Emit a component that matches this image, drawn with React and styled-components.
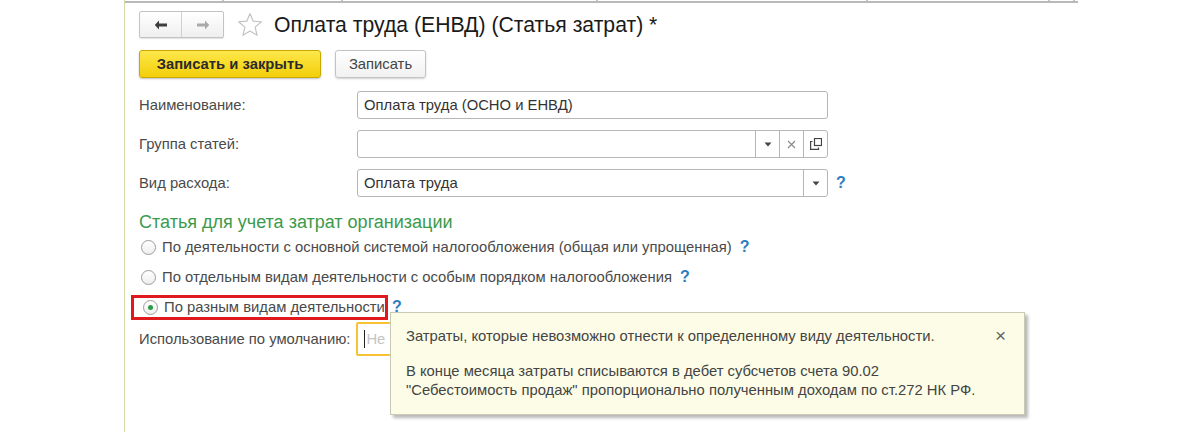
import React from "react";
import styled, { createGlobalStyle } from "styled-components";

const Global = createGlobalStyle`
  html, body { margin: 0; padding: 0; background: #ffffff; }
  body { font-family: "Liberation Sans", Arial, sans-serif; color: #444; }
  * { box-sizing: border-box; }
`;

const FS = "14.8px";

const Page = styled.div`
  width: 1200px;
  height: 432px;
  overflow: hidden;
  padding-left: 124px;
`;

const Window = styled.div`
  position: relative;
  width: 954px;
  height: 432px;
  border-left: 1px solid #d3dba6;
`;

const TabStrip = styled.div`
  display: flex;
  height: 3px;
  border-bottom: 2px solid #b9b9b9;
`;

const TabEdge = styled.div`
  width: ${(p) => p.$w}px;
  border-right: 2px solid #c4c4c4;
`;

const Content = styled.div`
  padding: 8px 0 0 14px;
`;

const HeaderRow = styled.div`
  display: flex;
  align-items: center;
  height: 27px;
`;

const NavGroup = styled.div`
  display: flex;
  width: 85px;
  height: 27px;
  border: 1px solid #c3c3c3;
  border-radius: 2px;
  background: linear-gradient(#ffffff, #efefef);
  box-shadow: 0 1px 1px rgba(0, 0, 0, 0.12);
`;

const NavBtn = styled.div`
  flex: 1;
  display: flex;
  align-items: center;
  justify-content: center;
  & + & { border-left: 1px solid #d0d0d0; }
`;

const StarWrap = styled.div`
  margin-left: 12px;
  width: 28px;
  height: 27px;
  display: flex;
  align-items: center;
  justify-content: center;
`;

const Title = styled.div`
  margin-left: 10px;
  font-size: 21.2px;
  color: #1a1a1a;
  white-space: nowrap;
`;

const ButtonRow = styled.div`
  display: flex;
  gap: 14px;
  margin-top: 12px;
`;

const Button = styled.div`
  width: ${(p) => p.$w}px;
  height: 28px;
  display: flex;
  align-items: center;
  justify-content: center;
  font-size: ${FS};
  border-radius: 3px;
  white-space: nowrap;
  ${(p) =>
    p.$primary
      ? `
    background: linear-gradient(#fde74a, #f3cf0a);
    border: 1px solid #c9a800;
    color: #2b2b2b;
    font-weight: bold;
    box-shadow: 0 1px 2px rgba(0,0,0,0.25);
  `
      : `
    background: linear-gradient(#ffffff, #f1f1f1);
    border: 1px solid #c3c3c3;
    color: #444;
    box-shadow: 0 1px 2px rgba(0,0,0,0.18);
  `}
`;

const Fields = styled.div`
  display: grid;
  grid-template-columns: 218px auto;
  row-gap: 11px;
  margin-top: 13px;
  align-items: center;
`;

const Label = styled.div`
  font-size: ${FS};
  color: #4a4a4a;
  white-space: nowrap;
`;

const FieldLine = styled.div`
  display: flex;
  align-items: center;
`;

const Input = styled.div`
  width: ${(p) => p.$w}px;
  height: 28px;
  display: flex;
  align-items: stretch;
  border: 1px solid #b6b6b6;
  border-radius: 3px;
  background: #fff;
  overflow: hidden;
`;

const InputText = styled.div`
  flex: 1;
  display: flex;
  align-items: center;
  padding-left: 6px;
  font-size: ${FS};
  color: #333;
  white-space: nowrap;
`;

const InputBtn = styled.div`
  width: 24px;
  display: flex;
  align-items: center;
  justify-content: center;
  border-left: 1px solid #b6b6b6;
  color: #555;
`;

const Help = styled.span`
  margin-left: ${(p) => p.$ml ?? 8}px;
  color: #2e7dbf;
  font-size: 16px;
  font-weight: bold;
`;

const SectionTitle = styled.div`
  margin-top: 14px;
  font-size: 18px;
  color: #3c9a4c;
  line-height: 22px;
`;

const Radios = styled.div`
  display: flex;
  flex-direction: column;
  gap: 8px;
  margin-top: 3px;
`;

const RadioRow = styled.div`
  display: flex;
  align-items: center;
  height: 22px;
`;

const RadioFrame = styled.div`
  display: flex;
  align-items: center;
  height: 25px;
  margin-left: -8px;
  padding: 0 0 0 7px;
  width: 257px;
  border: 3px solid #e0191f;
  white-space: nowrap;
`;

const Radio = styled.div`
  width: 15px;
  height: 15px;
  border-radius: 50%;
  border: 1px solid #9c9c9c;
  background: linear-gradient(#ffffff, #eeeeee);
  display: flex;
  align-items: center;
  justify-content: center;
  flex-shrink: 0;
  margin-left: 2px;
  &::after {
    content: "";
    display: ${(p) => (p.$on ? "block" : "none")};
    width: 5px;
    height: 5px;
    border-radius: 50%;
    background: #2f9a45;
  }
`;

const RadioText = styled.span`
  margin-left: 6px;
  font-size: ${FS};
  color: #4a4a4a;
  white-space: nowrap;
`;

const UsageRow = styled.div`
  display: flex;
  align-items: center;
  gap: 6px;
  margin-top: 4px;
`;

const FocusInput = styled.div`
  width: 120px;
  height: 34px;
  border: 2px solid #f7c233;
  border-radius: 2px;
  display: flex;
  align-items: center;
  padding-left: 6px;
  font-size: ${FS};
  color: #c4c4c4;
  white-space: nowrap;
  overflow: hidden;
`;

const Caret = styled.span`
  display: inline-block;
  width: 1px;
  height: 18px;
  background: #222;
  margin-right: 1px;
  flex-shrink: 0;
`;

const Tooltip = styled.div`
  position: absolute;
  left: 265px;
  top: 312px;
  width: 635px;
  height: 103px;
  background: #fdfde7;
  border: 1px solid #c9c9b6;
  box-shadow: 3px 3px 3px rgba(0, 0, 0, 0.28);
  padding: 14px 40px 0 15px;
  font-size: ${FS};
  color: #444;
  line-height: 19px;
`;

const TipPara = styled.div`
  white-space: nowrap;
  & + & { margin-top: 16px; }
`;

const TipClose = styled.div`
  position: absolute;
  right: 18px;
  top: 13px;
  font-size: 19px;
  color: #666;
`;

const ArrowLeft = ({ color }) => (
  <svg width="14" height="10" viewBox="0 0 14 10">
    <path d="M5 0.5 L0.8 5 L5 9.5 L5 6.4 L13 6.4 L13 3.6 L5 3.6 Z" fill={color} />
  </svg>
);

const ArrowRight = ({ color }) => (
  <svg width="14" height="10" viewBox="0 0 14 10">
    <path d="M9 0.5 L13.2 5 L9 9.5 L9 6.4 L1 6.4 L1 3.6 L9 3.6 Z" fill={color} />
  </svg>
);

const Star = () => (
  <svg width="26" height="26" viewBox="0 0 26 26">
    <path
      d="M13 1.5 L16.2 9.2 L24.5 9.8 L18.1 15.1 L20.1 23.3 L13 18.9 L5.9 23.3 L7.9 15.1 L1.5 9.8 L9.8 9.2 Z"
      fill="none"
      stroke="#c3c3c3"
      strokeWidth="1.2"
      strokeLinejoin="round"
    />
  </svg>
);

const Tri = () => (
  <svg width="8" height="5" viewBox="0 0 8 5">
    <path d="M0.5 0.5 L7.5 0.5 L4 4.5 Z" fill="#444" />
  </svg>
);

const Cross = () => (
  <svg width="9" height="9" viewBox="0 0 9 9">
    <path d="M1 1 L8 8 M8 1 L1 8" stroke="#888" strokeWidth="1.1" />
  </svg>
);

const CopyIcon = () => (
  <svg width="12" height="12" viewBox="0 0 12 12">
    <rect x="4.5" y="0.5" width="7" height="7" fill="#fff" stroke="#444" strokeWidth="1.2" />
    <path d="M2.5 3.5 L0.6 3.5 L0.6 11.4 L8.5 11.4 L8.5 9.5" fill="none" stroke="#444" strokeWidth="1.2" />
  </svg>
);

export default function App() {
  return (
    <>
      <Global />
      <Page>
        <Window>
          <TabStrip>
            <TabEdge $w={99} />
            <TabEdge $w={119} />
            <TabEdge $w={255} />
            <TabEdge $w={270} />
            <TabEdge $w={182} />
            <TabEdge $w={25} />
          </TabStrip>
          <Content>
            <HeaderRow>
              <NavGroup>
                <NavBtn>
                  <ArrowLeft color="#3d3d3d" />
                </NavBtn>
                <NavBtn>
                  <ArrowRight color="#a9a9a9" />
                </NavBtn>
              </NavGroup>
              <StarWrap>
                <Star />
              </StarWrap>
              <Title>Оплата труда (ЕНВД) (Статья затрат) *</Title>
            </HeaderRow>

            <ButtonRow>
              <Button $primary $w={182}>Записать и закрыть</Button>
              <Button $w={91}>Записать</Button>
            </ButtonRow>

            <Fields>
              <Label>Наименование:</Label>
              <FieldLine>
                <Input $w={471}>
                  <InputText>Оплата труда (ОСНО и ЕНВД)</InputText>
                </Input>
              </FieldLine>

              <Label>Группа статей:</Label>
              <FieldLine>
                <Input $w={471}>
                  <InputText />
                  <InputBtn>
                    <Tri />
                  </InputBtn>
                  <InputBtn>
                    <Cross />
                  </InputBtn>
                  <InputBtn>
                    <CopyIcon />
                  </InputBtn>
                </Input>
              </FieldLine>

              <Label>Вид расхода:</Label>
              <FieldLine>
                <Input $w={471}>
                  <InputText>Оплата труда</InputText>
                  <InputBtn>
                    <Tri />
                  </InputBtn>
                </Input>
                <Help>?</Help>
              </FieldLine>
            </Fields>

            <SectionTitle>Статья для учета затрат организации</SectionTitle>

            <Radios>
              <RadioRow>
                <Radio />
                <RadioText>
                  По деятельности с основной системой налогообложения (общая или упрощенная)
                </RadioText>
                <Help>?</Help>
              </RadioRow>
              <RadioRow>
                <Radio />
                <RadioText>По отдельным видам деятельности с особым порядком налогообложения</RadioText>
                <Help>?</Help>
              </RadioRow>
              <RadioRow>
                <RadioFrame>
                  <Radio $on />
                  <RadioText>По разным видам деятельности</RadioText>
                </RadioFrame>
                <Help $ml={4}>?</Help>
              </RadioRow>
            </Radios>

            <UsageRow>
              <Label>Использование по умолчанию:</Label>
              <FocusInput>
                <Caret />
                Не используется
              </FocusInput>
            </UsageRow>
          </Content>

          <Tooltip>
            <TipPara>Затраты, которые невозможно отнести к определенному виду деятельности.</TipPara>
            <TipPara>
              В конце месяца затраты списываются в дебет субсчетов счета 90.02
              <br />
              "Себестоимость продаж" пропорционально полученным доходам по ст.272 НК РФ.
            </TipPara>
            <TipClose>×</TipClose>
          </Tooltip>
        </Window>
      </Page>
    </>
  );
}
